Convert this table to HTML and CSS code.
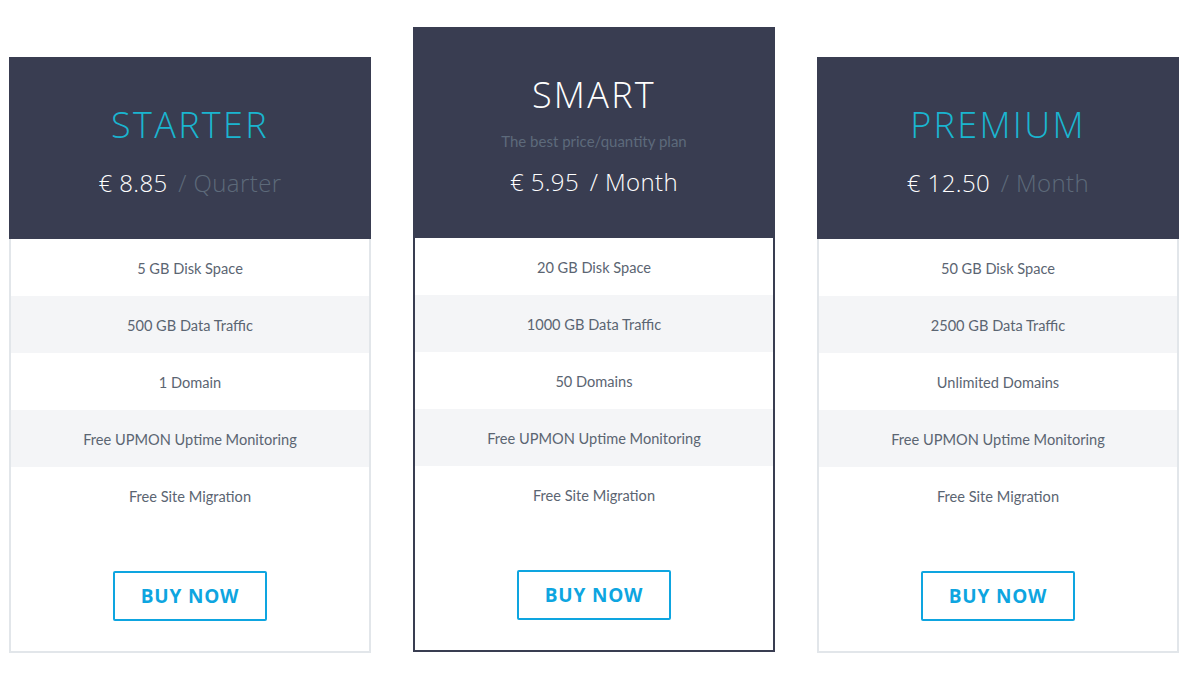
FILE: index.html
```html
<html>
  <head>
    <title>Hosting plans</title>
    <link rel="stylesheet" href="styles.css">
  </head>
  <body>
    <div class="plans">
      <div class="plan">
        <div class="head">
          <div class="name">STARTER</div>
          <div class="price">€ 8.85 <span class="period">/ Quarter</span></div>
        </div>
        <div class="body">
          <div class="feature">5 GB Disk Space</div>
          <div class="feature">500 GB Data Traffic</div>
          <div class="feature">1 Domain</div>
          <div class="feature">Free UPMON Uptime Monitoring</div>
          <div class="feature">Free Site Migration</div>
          <div class="action"><a class="buy" href="#">BUY NOW</a></div>
        </div>
      </div>
      <div class="plan featured">
        <div class="head">
          <div class="name">SMART</div>
          <div class="tagline">The best price/quantity plan</div>
          <div class="price">€ 5.95 <span class="period">/ Month</span></div>
        </div>
        <div class="body">
          <div class="feature">20 GB Disk Space</div>
          <div class="feature">1000 GB Data Traffic</div>
          <div class="feature">50 Domains</div>
          <div class="feature">Free UPMON Uptime Monitoring</div>
          <div class="feature">Free Site Migration</div>
          <div class="action"><a class="buy" href="#">BUY NOW</a></div>
        </div>
      </div>
      <div class="plan">
        <div class="head">
          <div class="name">PREMIUM</div>
          <div class="price">€ 12.50 <span class="period">/ Month</span></div>
        </div>
        <div class="body">
          <div class="feature">50 GB Disk Space</div>
          <div class="feature">2500 GB Data Traffic</div>
          <div class="feature">Unlimited Domains</div>
          <div class="feature">Free UPMON Uptime Monitoring</div>
          <div class="feature">Free Site Migration</div>
          <div class="action"><a class="buy" href="#">BUY NOW</a></div>
        </div>
      </div>
    </div>
  </body>
</html>
```

FILE: styles.css
```css
body {
  margin: 0;
  background: #fff;
  font-family: Lato, "Liberation Sans", sans-serif;
}
.plans {
  display: flex;
  align-items: flex-start;
  gap: 42px;
  padding: 27px 0 0 9px;
}
.plan {
  width: 362px;
  margin-top: 30px;
}
.plan.featured {
  margin-top: 0;
}
.head {
  background: #393d51;
  text-align: center;
  padding: 48px 0 41px;
  font-family: "Open Sans", sans-serif;
  font-weight: 300;
}
.name {
  color: #1ab5d0;
  font-size: 36px;
  line-height: 40px;
  letter-spacing: 2.3px;
}
.featured .name {
  color: #fff;
}
.tagline {
  margin-top: 16px;
  color: #5d6a7b;
  font-family: Lato, sans-serif;
  font-weight: 400;
  font-size: 15px;
  line-height: 20px;
}
.price {
  margin-top: 23px;
  color: #fff;
  font-size: 24px;
  line-height: 30px;
  letter-spacing: 0.4px;
}
.featured .price {
  margin-top: 16px;
}
.period {
  margin-left: 4px;
  color: #5d6a7a;
}
.featured .period {
  color: #fff;
}
.body {
  border: 2px solid #e2e6ea;
  border-top: 0;
}
.featured .body {
  border-color: #393d51;
}
.feature {
  height: 57px;
  line-height: 59px;
  text-align: center;
  color: #5b6572;
  font-size: 14.6px;
}
.feature:nth-child(even) {
  background: #f4f5f7;
}
.action {
  padding: 47px 0 30px;
  text-align: center;
}
.buy {
  display: inline-block;
  box-sizing: border-box;
  width: 154px;
  height: 50px;
  line-height: 46px;
  border: 2px solid #0ea5e0;
  border-radius: 2px;
  color: #0ea5e0;
  font-family: "Open Sans", sans-serif;
  font-weight: 700;
  font-size: 19px;
  letter-spacing: 0.8px;
  text-decoration: none;
}
```
